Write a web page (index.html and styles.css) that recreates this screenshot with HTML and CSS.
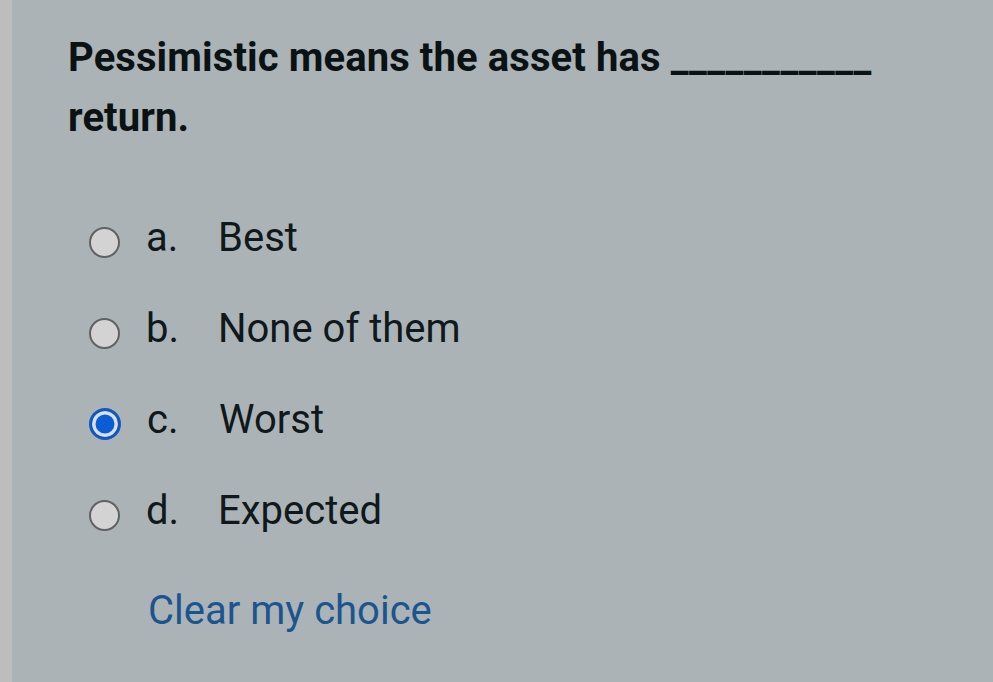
FILE: index.html
```html
<!DOCTYPE html>
<html>
<head>
<meta charset="utf-8">
<link rel="stylesheet" href="styles.css">
</head>
<body>
<div class="page">
  <div class="edge"></div>
  <div class="content">
    <div class="question">Pessimistic means the asset has <span class="blank">___________</span><br>return.</div>
    <div class="answers">
      <div class="option"><span class="radio"></span><span class="letter">a.</span><span class="text">Best</span></div>
      <div class="option"><span class="radio"></span><span class="letter">b.</span><span class="text">None of them</span></div>
      <div class="option"><span class="radio checked"></span><span class="letter">c.</span><span class="text">Worst</span></div>
      <div class="option"><span class="radio"></span><span class="letter">d.</span><span class="text">Expected</span></div>
    </div>
    <div class="clear">Clear my choice</div>
  </div>
</div>
</body>
</html>
```
FILE: styles.css
```css
html, body {
  margin: 0;
  padding: 0;
  width: 993px;
  height: 682px;
  overflow: hidden;
  background: #abb3b6;
  font-family: Roboto, "Noto Sans", sans-serif;
}
.page {
  display: flex;
  height: 682px;
}
.edge {
  width: 12px;
  background: #bdbdbe;
  flex: none;
}
.content {
  padding: 28px 0 0 56px;
  flex: 1;
}
.question {
  font-weight: 700;
  font-size: 40px;
  line-height: 60px;
  color: #0a1214;
  letter-spacing: 0.1px;
}
.blank {
  letter-spacing: 0.5px;
}
.answers {
  margin-top: 44px;
  margin-left: 21px;
}
.option {
  display: flex;
  align-items: center;
  height: 91px;
  font-size: 40px;
  color: #0f181a;
}
.radio {
  width: 27px;
  height: 27px;
  border-radius: 50%;
  border: 2.5px solid #5e6264;
  background: #d3d3d3;
  flex: none;
  margin-top: 9px;
}
.radio.checked {
  border: 3px solid #1256c4;
  background: #0b5dd6;
  box-shadow: inset 0 0 0 3.5px #d6e0ee;
  width: 26px;
  height: 26px;
}
.letter {
  width: 72px;
  margin-left: 26px;
}
.clear {
  margin-left: 80px;
  margin-top: 31px;
  font-size: 40px;
  color: #1a558f;
}
```
